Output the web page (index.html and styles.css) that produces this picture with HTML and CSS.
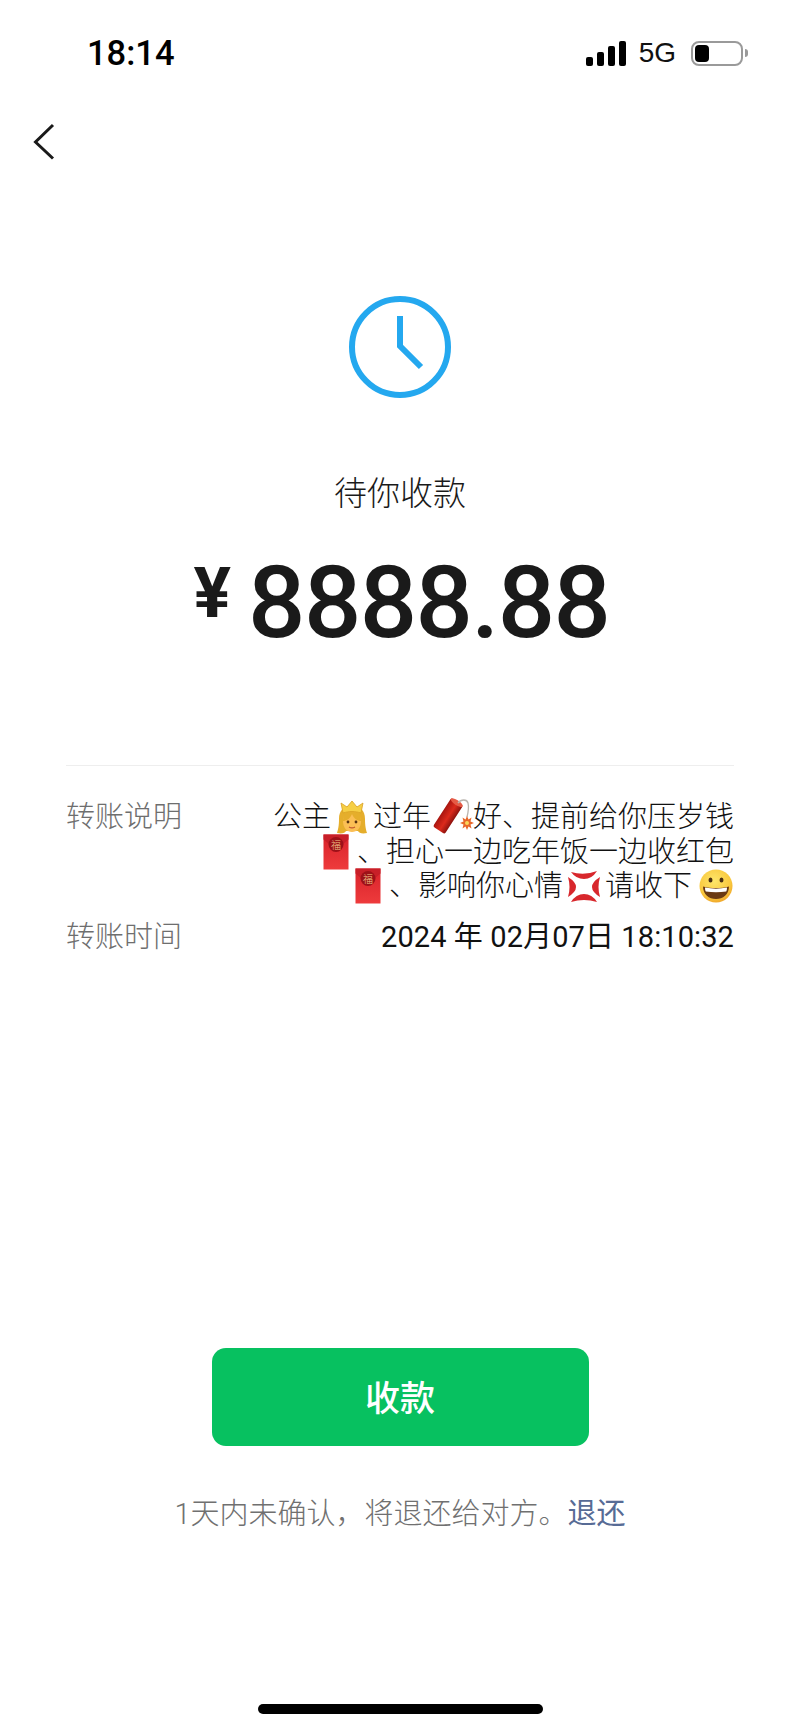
FILE: index.html
```html
<!DOCTYPE html>
<html lang="zh-CN">
<head>
  <meta charset="UTF-8">
  <meta name="viewport" content="width=device-width, initial-scale=1.0">
  <title>待你收款</title>
  <link rel="stylesheet" href="styles.css">
</head>
<body>
  <!-- shared emoji parts -->
  <svg class="defs" aria-hidden="true">
    <defs>
      <linearGradient id="env-red" x1="0" y1="0" x2="0" y2="1">
        <stop offset="0" stop-color="#d8222a"/>
        <stop offset="1" stop-color="#ee3b3c"/>
      </linearGradient>
      <radialGradient id="grin-face" cx="0.45" cy="0.35" r="0.7">
        <stop offset="0" stop-color="#fde66a"/>
        <stop offset="0.7" stop-color="#f9c83e"/>
        <stop offset="1" stop-color="#ee9f25"/>
      </radialGradient>
      <linearGradient id="stick" x1="0" y1="0" x2="1" y2="0">
        <stop offset="0" stop-color="#a81510"/>
        <stop offset="0.55" stop-color="#dc2a1c"/>
        <stop offset="1" stop-color="#8d120e"/>
      </linearGradient>
      <symbol id="envelope" viewBox="0 0 44 44">
        <rect x="9.500" y="4.500" width="25" height="35" fill="url(#env-red)"/>
        <path d="M9.500 4.500h25v5L22 20 9.500 9.500z" fill="#c81f28"/>
        <circle cx="22" cy="14.500" r="7.500" fill="#9d1118"/>
        <text x="22" y="18.500" class="fu">福</text>
      </symbol>
    </defs>
  </svg>

  <div class="page">
    <div class="status-bar">
      <span class="clock-time">18:14</span>
      <div class="status-icons">
        <div class="signal">
          <i class="bar-1"></i><i class="bar-2"></i><i class="bar-3"></i><i class="bar-4"></i>
        </div>
        <span class="network">5G</span>
        <div class="battery"><div class="battery-level"></div></div>
        <div class="battery-nub"></div>
      </div>
    </div>

    <div class="nav">
      <svg class="back" width="24" height="40" viewBox="0 0 24 40">
        <path d="M21 3 3.500 20 21 36.500" fill="none" stroke="#1a1a1a" stroke-width="3"/>
      </svg>
    </div>

    <main class="transfer">
      <svg class="pending-icon" width="102" height="102" viewBox="0 0 102 102">
        <circle cx="51" cy="51" r="48" fill="none" stroke="#24a8ef" stroke-width="6"/>
        <path d="M51 20v30l21 21" fill="none" stroke="#24a8ef" stroke-width="6"/>
      </svg>
      <div class="status-title">待你收款</div>
      <div class="amount">
        <span class="currency">¥</span>
        <span class="value">8888.88</span>
      </div>
    </main>

    <div class="details">
      <div class="row">
        <div class="label">转账说明</div>
        <div class="content">
          <div class="line">
            公主
            <svg class="emoji" viewBox="0 0 44 44">
              <path d="M7 38c1-3 2-7 2-14 0-9 5-13 13-13s13 4 13 13c0 7 1 11 2 14-5 1-8 0-9-2H16c-1 2-4 3-9 2z" fill="#e5ae2c"/>
              <path d="M13 18 11 8l6 4 5-6 5 6 6-4-2 10c-6-2-12-2-18 0z" fill="#f6cf45" stroke="#d99f23" stroke-width=".8"/>
              <path d="M13 26c0-5 4-8 9-8s9 3 9 8c0 7-4 11-9 11s-9-4-9-11z" fill="#fbbf55"/>
              <path d="M13 26c3 0 7-2 9-7 2 5 6 7 9 7 0-6-3-9-9-9s-9 3-9 9z" fill="#e5ae2c"/>
              <circle cx="18" cy="27" r="1.400" fill="#5a3410"/>
              <circle cx="26" cy="27" r="1.400" fill="#5a3410"/>
              <path d="M19 32c2 1.300 4 1.300 6 0" fill="none" stroke="#c0562c" stroke-width="1.200"/>
            </svg>
            过年
            <svg class="emoji" viewBox="0 0 44 44">
              <g transform="rotate(33 18 21)">
                <rect x="11" y="4" width="14" height="34" rx="2" fill="url(#stick)"/>
                <ellipse cx="18" cy="5" rx="7" ry="2.500" fill="#e65a45"/>
              </g>
              <path d="M28 8c3-4 9-4 10 0 1 4 0 10-1 14" fill="none" stroke="#b9b4ae" stroke-width="1.300"/>
              <path d="M37 21l1.500 3.500 3-2-1 4 3.500 1.500-3.500 1.500 1 4-3-2-1.500 3.500-1.500-3.500-3 2 1-4-3.500-1.500 3.500-1.500-1-4 3 2z" fill="#e8672a"/>
              <circle cx="37" cy="28" r="2" fill="#f9d65a"/>
            </svg>
            好、提前给你压岁钱
          </div>
          <div class="line">
            <svg class="emoji" viewBox="0 0 44 44"><use href="#envelope"/></svg>
            、担心一边吃年饭一边收红包
          </div>
          <div class="line">
            <svg class="emoji" viewBox="0 0 44 44"><use href="#envelope"/></svg>
            、影响你心情
            <svg class="emoji" viewBox="0 0 44 44">
              <g fill="#d8272c">
                <path d="M9 8Q22 12 35 7 30 15 22 15 14 15 9 8z"/>
                <path d="M9 38Q22 34 35 38 30 30 22 30 14 30 9 38z"/>
                <path d="M6 13Q9 23 6 33 14 28 14 23 14 18 6 13z"/>
                <path d="M38 13Q35 23 38 33 30 28 30 23 30 18 38 13z"/>
              </g>
            </svg>
            请收下
            <svg class="emoji" viewBox="0 0 44 44">
              <circle cx="25" cy="22" r="16.500" fill="url(#grin-face)"/>
              <ellipse cx="19.500" cy="16" rx="2" ry="2.600" fill="#4a2f12"/>
              <ellipse cx="30.500" cy="16" rx="2" ry="2.600" fill="#4a2f12"/>
              <path d="M12 22.500c8 2 18 2 26 0 0 8-6 12.500-13 12.500s-13-4.500-13-12.500z" fill="#6b3a12"/>
              <path d="M14 23.500c7 1.500 15 1.500 22 0 0 2-.3 3-.8 4-7 1-13.400 1-20.400 0-.5-1-.8-2-.8-4z" fill="#fff"/>
            </svg>
          </div>
        </div>
      </div>
      <div class="row">
        <div class="label">转账时间</div>
        <div class="content date">2024 年 02月07日 18:10:32</div>
      </div>
    </div>

    <div class="actions">
      <button class="receive-btn">收款</button>
      <p class="hint">1天内未确认&#xFF0C;将退还给对方。<a class="refund">退还</a></p>
    </div>

    <div class="home-indicator"></div>
  </div>
</body>
</html>
```

FILE: styles.css
```css
* {
  box-sizing: border-box;
}
body {
  margin: 0;
  background: #fff;
  color: #1a1a1a;
  font-family: Roboto, "Noto Sans CJK SC", sans-serif;
}
.defs {
  position: absolute;
  width: 0;
  height: 0;
}
.fu {
  font-size: 10px;
  fill: #f3c98b;
  text-anchor: middle;
  font-family: "Noto Sans CJK SC", sans-serif;
}
.page {
  display: flex;
  flex-direction: column;
  height: 1731px;
}

/* status bar */
.status-bar {
  display: flex;
  justify-content: space-between;
  align-items: center;
  height: 106px;
  padding: 0 52px 0 87px;
}
.clock-time {
  font-size: 34.5px;
  font-weight: 500;
  color: #000;
}
.status-icons {
  display: flex;
  align-items: center;
}
.signal {
  display: flex;
  align-items: flex-end;
  gap: 4px;
  height: 25px;
}
.signal i {
  display: block;
  width: 7px;
  background: #000;
  border-radius: 2px;
}
.bar-1 { height: 9px; }
.bar-2 { height: 14px; }
.bar-3 { height: 20px; }
.bar-4 { height: 25px; }
.network {
  margin: 0 15px 0 13px;
  font-family: "Liberation Sans", sans-serif;
  font-size: 28px;
  color: #111;
}
.battery {
  width: 52px;
  height: 25px;
  padding: 2px;
  border: 2px solid #9a9a9a;
  border-radius: 8px;
}
.battery-level {
  width: 14px;
  height: 100%;
  background: #000;
  border-radius: 4px;
}
.battery-nub {
  width: 3px;
  height: 8px;
  margin-left: 2px;
  background: #9a9a9a;
  border-radius: 0 3px 3px 0;
}

/* nav */
.nav {
  height: 40px;
  margin-top: 16px;
  padding-left: 32px;
}
.back {
  display: block;
}

/* amount block */
.transfer {
  display: flex;
  flex-direction: column;
  align-items: center;
  margin-top: 134px;
}
.pending-icon {
  display: block;
}
.status-title {
  margin-top: 76px;
  font-size: 33px;
  font-weight: 300;
  line-height: 40px;
}
.amount {
  display: flex;
  align-items: flex-start;
  gap: 17px;
  margin: 39px 0 0 3px;
  line-height: 100px;
}
.currency {
  padding-top: 2px;
  font-size: 70px;
  font-weight: 700;
  line-height: 76px;
}
.value {
  font-size: 101px;
  font-weight: 500;
  letter-spacing: -1.6px;
}

/* detail rows */
.details {
  margin: 112px 66px 0;
  padding-top: 34px;
  border-top: 1px solid #eee;
}
.row {
  display: flex;
  justify-content: space-between;
  margin-bottom: 16px;
  font-size: 29px;
  font-weight: 300;
  line-height: 34.5px;
}
.label {
  color: #6e6e6e;
  white-space: nowrap;
}
.content {
  color: #111;
  white-space: nowrap;
}
.line {
  display: flex;
  justify-content: flex-end;
  align-items: center;
  height: 34.5px;
}
.date {
  font-weight: 400;
  letter-spacing: .1px;
}
.emoji {
  flex: none;
  width: 44px;
  height: 44px;
  margin: 0 -1px;
}

/* button + hint */
.actions {
  display: flex;
  flex-direction: column;
  align-items: center;
  margin-top: 378px;
}
.receive-btn {
  width: 377px;
  height: 98px;
  padding: 0 0 4px;
  border: 0;
  border-radius: 14px;
  background: #07c160;
  color: #fff;
  font-family: inherit;
  font-size: 35px;
  font-weight: 500;
}
.hint {
  margin: 48px 0 0;
  font-size: 29px;
  font-weight: 300;
  line-height: 40px;
  color: #707070;
}
.refund {
  color: #576b95;
  font-weight: 400;
}

.home-indicator {
  width: 285px;
  height: 10px;
  margin: auto auto 17px;
  background: #000;
  border-radius: 5px;
}
```
